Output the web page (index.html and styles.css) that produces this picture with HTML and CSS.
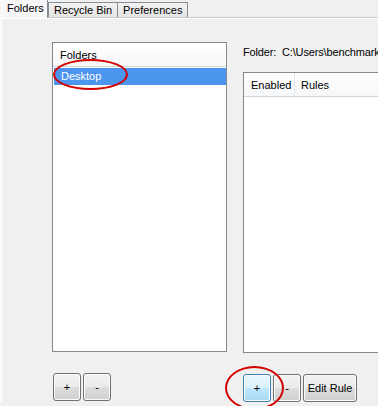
FILE: index.html
```html
<!DOCTYPE html>
<html lang="en">
<head>
    <meta charset="UTF-8">
    <title>Folder Rules</title>
    <link rel="stylesheet" href="styles.css">
</head>
<body>
    <div class="tabs">
        <div class="tab active">Folders</div>
        <div class="tab">Recycle Bin</div>
        <div class="tab">Preferences</div>
    </div>

    <div class="panel">
        <div class="left-col">
            <div class="listbox folders">
                <div class="list-header">
                    <span class="col">Folders</span>
                </div>
                <div class="row selected">Desktop</div>
            </div>
            <div class="button-group">
                <button>+</button>
                <button>-</button>
            </div>
        </div>

        <div class="right-col">
            <div class="folder-path">Folder:&nbsp; C:\Users\benchmark</div>
            <div class="listbox rules">
                <div class="list-header">
                    <span class="col enabled">Enabled</span>
                    <span class="col">Rules</span>
                </div>
            </div>
            <div class="button-group">
                <button class="hot">+</button>
                <button>-</button>
                <button class="edit-btn">Edit Rule</button>
            </div>
        </div>
    </div>

    <!-- red annotation circles -->
    <div class="mark mark-desktop"></div>
    <div class="mark mark-add"></div>
</body>
</html>
```

FILE: styles.css
```css
body {
    margin: 0;
    width: 378px;
    height: 406px;
    overflow: hidden;
    position: relative;
    background-color: #f0f0f0;
    font-family: "Liberation Sans", Arial, sans-serif;
    font-size: 11px;
    color: #000;
}

.tabs {
    display: flex;
    height: 17px;
    align-items: flex-end;
}

.tab {
    box-sizing: border-box;
    height: 15px;
    line-height: 14px;
    padding: 0 5px;
    border: 1px solid #898c95;
    border-bottom: none;
    border-left: none;
    background: linear-gradient(#f2f2f2, #e4e4e4);
    white-space: nowrap;
}

.tab:nth-child(2) {
    border-left: 1px solid #898c95;
}

.tab.active {
    height: 18px;
    margin-bottom: -1px;
    line-height: 17px;
    width: 48px;
    padding: 0 0 0 7px;
    border: none;
    border-right: 1px solid #898c95;
    background: #f7f7f7;
    position: relative;
    z-index: 1;
}

.panel {
    display: flex;
    border-top: 1px solid #c9cbd1;
    border-left: 1px solid #fafafa;
    box-shadow: inset 1px 1px 0 #ffffff;
    padding: 24px 0 0 51px;
    gap: 16px;
}

.left-col {
    width: 175px;
    flex-shrink: 0;
}

.right-col {
    width: 220px;
    flex-shrink: 0;
}

.listbox {
    box-sizing: border-box;
    border: 1px solid #828790;
    background-color: #ffffff;
}

.folders {
    height: 310px;
}

.rules {
    height: 281px;
}

.list-header {
    display: flex;
    height: 23px;
    border-bottom: 1px solid #d5d5d5;
    background: linear-gradient(#ffffff, #f6f7f8);
}

.col {
    line-height: 25px;
    padding-left: 7px;
}

.enabled {
    width: 43px;
    border-right: 1px solid #e3e4e6;
}

.rules .col + .col {
    padding-left: 6px;
}

.row {
    height: 17px;
    line-height: 17px;
    padding-left: 7px;
    margin: 1px 0 0 1px;
}

.selected {
    background-color: #4c95ee;
    color: #ffffff;
}

.folder-path {
    height: 30px;
    line-height: 20px;
    letter-spacing: -0.15px;
    white-space: nowrap;
}

.button-group {
    display: flex;
    gap: 2px;
    margin-top: 21px;
}

.left-col .button-group {
    margin-left: 1px;
}

button {
    box-sizing: border-box;
    width: 28px;
    height: 28px;
    padding: 0;
    border: 1px solid #707070;
    border-radius: 3px;
    background: linear-gradient(#f2f2f2 0%, #ebebeb 50%, #dddddd 50%, #cfcfcf 100%);
    box-shadow: inset 0 0 0 1px #fcfcfc;
    font-family: "Liberation Sans", Arial, sans-serif;
    font-size: 11px;
    color: #000;
    cursor: pointer;
}

button.hot {
    border-color: #3c7fb1;
    background: linear-gradient(#eaf6fd 0%, #d9f0fc 50%, #bee6fd 50%, #a7d9f5 100%);
}

.edit-btn {
    width: 54px;
}

.mark {
    position: absolute;
    box-sizing: border-box;
    border: 2px solid #d40000;
    border-radius: 50%;
}

.mark-desktop {
    left: 53px;
    top: 59px;
    width: 75px;
    height: 31px;
}

.mark-add {
    left: 225px;
    top: 366px;
    width: 59px;
    height: 44px;
}
```
